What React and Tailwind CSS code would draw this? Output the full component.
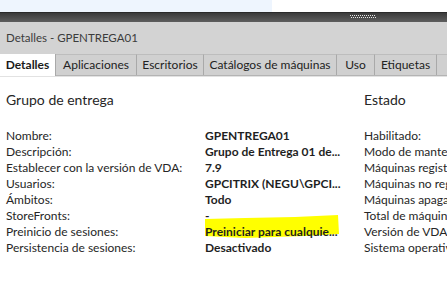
import React from 'react'

const TABS = ['Detalles', 'Aplicaciones', 'Escritorios', 'Catálogos de máquinas', 'Uso', 'Etiquetas', '']

const TAB_WIDTHS = {
  Detalles: 'w-[56px]',
  Aplicaciones: 'w-[81px]',
  Escritorios: 'w-[67px]',
  'Catálogos de máquinas': 'w-[133px]',
  Uso: 'w-[38px]',
  Etiquetas: 'w-[62px]',
  '': 'w-[30px]',
}

const GRUPO = [
  ['Nombre:', 'GPENTREGA01'],
  ['Descripción:', 'Grupo de Entrega 01 de...'],
  ['Establecer con la versión de VDA:', '7.9'],
  ['Usuarios:', 'GPCITRIX (NEGU\\GPCI...'],
  ['Ámbitos:', 'Todo'],
  ['StoreFronts:', '-'],
  ['Preinicio de sesiones:', 'Preiniciar para cualquie...'],
  ['Persistencia de sesiones:', 'Desactivado'],
]

const ESTADO = [
  'Habilitado:',
  'Modo de mantenimiento:',
  'Máquinas registradas:',
  'Máquinas no registradas:',
  'Máquinas apagadas:',
  'Total de máquinas:',
  'Versión de VDA:',
  'Sistema operativo:',
]

function Grip() {
  const dots = []
  for (let i = 0; i < 13; i++) {
    dots.push(<rect key={'a' + i} x={i * 2} y={0} width={1} height={1} fill="#e8e8e8" />)
    dots.push(<rect key={'b' + i} x={i * 2 + 1} y={2} width={1} height={1} fill="#e8e8e8" />)
  }
  return (
    <svg width="26" height="4" viewBox="0 0 26 4" className="ml-[350px] mt-[2px]">
      {dots}
    </svg>
  )
}

export default function App() {
  return (
    <div className="w-[447px] h-[290px] overflow-hidden bg-white relative text-[12px] text-[#262626] font-['Lato',sans-serif]">
      <div className="flex h-[12px]">
        <div className="w-[272px] bg-[#eef5fe]" />
        <div className="flex-1 bg-white" />
      </div>

      <div className="h-[10px] bg-gradient-to-b from-[#3b3b3b] to-[#5e5e5e] border-t border-[#2a2a2a]">
        <Grip />
      </div>

      <div className="bg-[#d3d3d3]">
        <div className="h-[32px] flex items-center pl-[6px] text-[11.5px] text-[#3c3c3c]">
          Detalles - GPENTREGA01
        </div>
        <div className="flex h-[22px] border-b border-[#b4b4b4]">
          {TABS.map((t, i) => (
            <div
              key={i}
              className={`${TAB_WIDTHS[t]} shrink-0 whitespace-nowrap flex items-center justify-center border-r border-[#a9a9a9] ${
                i === 0 ? 'bg-white font-bold text-[#1a1a1a] -mb-px' : 'bg-[#d0d0d0] border-t border-t-[#bdbdbd] text-[#222]'
              }`}
            >
              {t}
            </div>
          ))}
        </div>
      </div>

      <div className="border-t border-[#e2e2e2] flex pt-[14px]">
        <div className="w-[358px] shrink-0 pl-[6px]">
          <div className="text-[14px] leading-[18px] h-[18px]">Grupo de entrega</div>
          <div className="mt-[19px] relative">
            <svg
              width="136"
              height="24"
              viewBox="0 0 136 24"
              className="absolute left-[199px] top-[87px]"
            >
              <path
                d="M0 4 L40 3 L90 2 L133 0 L134 19 L100 21 L40 23 L0 21 Z"
                fill="#ffff00"
              />
            </svg>
            {GRUPO.map(([label, value]) => (
              <div key={label} className="flex h-[16px] leading-[16px] relative">
                <div className="w-[199px] shrink-0">{label}</div>
                <div className="font-bold text-[#1f1f1f] whitespace-nowrap">{value}</div>
              </div>
            ))}
          </div>
        </div>
        <div className="shrink-0 pl-[6px] whitespace-nowrap">
          <div className="text-[14px] leading-[18px] h-[18px]">Estado</div>
          <div className="mt-[19px]">
            {ESTADO.map(label => (
              <div key={label} className="h-[16px] leading-[16px]">{label}</div>
            ))}
          </div>
        </div>
      </div>
    </div>
  )
}
